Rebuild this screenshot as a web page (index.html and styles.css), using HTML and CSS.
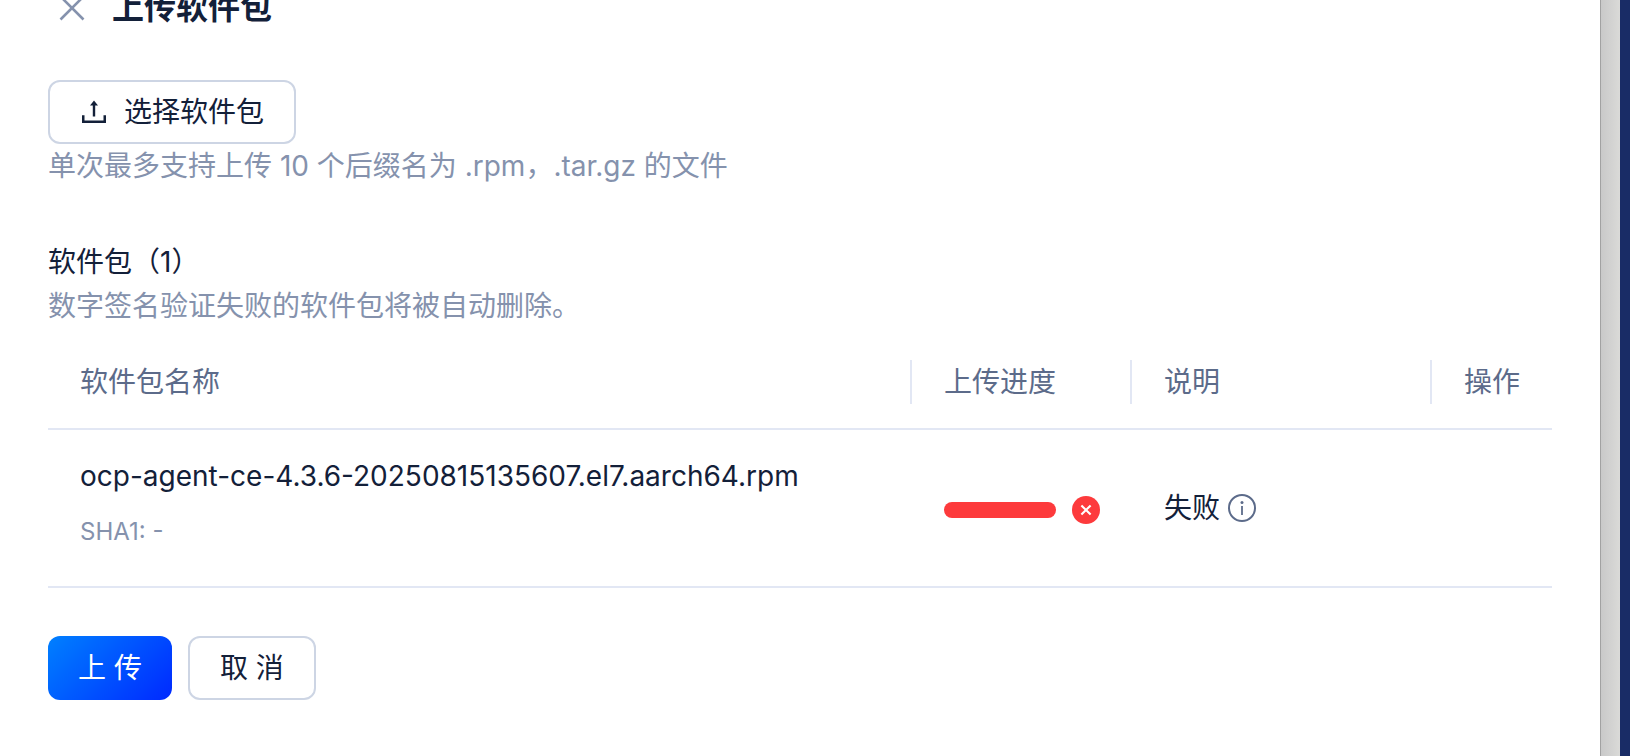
FILE: index.html
```html
<!DOCTYPE html>
<html lang="zh-CN">
<head>
<meta charset="utf-8">
<title>上传软件包</title>
<link rel="stylesheet" href="styles.css">
</head>
<body>
<main class="drawer">
  <header class="drawer-header">
    <button class="close" type="button" aria-label="关闭">
      <svg width="28" height="28" viewBox="0 0 28 28" fill="none" stroke="currentColor" stroke-width="2.6"><path d="M2.500 2.500l23 23M25.500 2.500l-23 23"/></svg>
    </button>
    <h1 class="title">上传软件包</h1>
  </header>

  <section class="picker">
    <button class="btn btn-icon" type="button">
      <svg width="28" height="28" viewBox="0 0 28 28" fill="currentColor" aria-hidden="true"><path d="M12.800 7.500H10L14 2.600l4 4.900h-2.800V18.500h-2.400zM2 17.300h2.500v5.300h19v-5.300H26V25H2z"/></svg>
      <span>选择软件包</span>
    </button>
    <p class="hint">单次最多支持上传 10 个后缀名为 .rpm，.tar.gz 的文件</p>
  </section>

  <section class="packages">
    <h2 class="subtitle">软件包（1）</h2>
    <p class="hint">数字签名验证失败的软件包将被自动删除。</p>
    <table class="table">
      <colgroup><col><col class="col-progress"><col class="col-note"><col class="col-action"></colgroup>
      <thead>
        <tr><th scope="col">软件包名称</th><th scope="col">上传进度</th><th scope="col">说明</th><th scope="col">操作</th></tr>
      </thead>
      <tbody>
        <tr>
          <td>
            <div class="name">ocp-agent-ce-4.3.6-20250815135607.el7.aarch64.rpm</div>
            <div class="sha">SHA1: -</div>
          </td>
          <td>
            <div class="progress">
              <div class="bar" role="progressbar" aria-label="上传进度" aria-valuenow="100"></div>
              <svg width="28" height="28" viewBox="0 0 28 28" aria-hidden="true"><circle cx="14" cy="14" r="14" fill="#fd3a3c"/><path d="M9.400 9.400l9.200 9.200M18.600 9.400l-9.200 9.200" stroke="#fff" stroke-width="2.100"/></svg>
            </div>
          </td>
          <td>
            <div class="status">
              <span>失败</span>
              <svg width="28" height="28" viewBox="0 0 28 28" aria-hidden="true"><circle cx="14" cy="14" r="13" fill="none" stroke="#5c6b8a" stroke-width="2"/><circle cx="14" cy="8.500" r="1.500" fill="#5c6b8a"/><path d="M13.100 12h1.800v9h-1.800z" fill="#5c6b8a"/></svg>
            </div>
          </td>
          <td></td>
        </tr>
      </tbody>
    </table>
  </section>

  <footer class="actions">
    <button class="btn btn-primary" type="button">上 传</button>
    <button class="btn" type="button">取 消</button>
  </footer>
</main>
<div class="window-edge"></div>
<div class="desktop"></div>
</body>
</html>
```
FILE: styles.css
```css
* {
  box-sizing: border-box;
}

body {
  margin: 0;
  min-height: 100vh;
  display: flex;
  background: #fff;
  color: #132039;
  font: 28px/44px Inter, "Noto Sans CJK SC", sans-serif;
}

h1, h2, p {
  margin: 0;
  font-weight: 400;
}

svg {
  display: block;
  flex: none;
}

.drawer {
  flex: 1;
  min-width: 0;
  padding: 0 48px 48px;
}

.window-edge {
  width: 20px;
  border-left: 1px solid #a2a2a2;
  background: linear-gradient(90deg, #c9c9c9, #dadad8);
}

.desktop {
  width: 10px;
  background: #192c66;
}

.drawer-header {
  display: flex;
  align-items: center;
  gap: 16px;
  height: 16px;
  margin-bottom: 64px;
}

.close {
  display: flex;
  justify-content: center;
  width: 48px;
  padding: 0;
  border: 0;
  background: none;
  color: #8592ad;
}

.title {
  font-size: 32px;
  line-height: 48px;
  font-weight: 700;
}

.subtitle {
  font-size: 28px;
}

.btn {
  height: 64px;
  padding: 0 30px;
  border: 2px solid #cdd5e4;
  border-radius: 12px;
  background: #fff;
  color: inherit;
  font: inherit;
}

.btn-icon {
  display: flex;
  align-items: center;
  gap: 16px;
}

.btn-primary {
  border: 0;
  background: linear-gradient(135deg, #0080ff, #0029ff);
  color: #fff;
}

.hint {
  color: #8592ad;
}

.packages {
  margin-top: 52px;
}

.table {
  width: 100%;
  margin-top: 8px;
  table-layout: fixed;
  border-collapse: separate;
  border-spacing: 0;
}

.col-progress {
  width: 220px;
}

.col-note {
  width: 300px;
}

.col-action {
  width: 120px;
}

.table th,
.table td {
  padding: 24px 32px;
  border-bottom: 2px solid #e2e7f4;
  text-align: left;
  vertical-align: middle;
}

.table th {
  padding-right: 0;
  color: #5c6b8a;
  font-weight: 400;
  background: linear-gradient(#e2e7f4, #e2e7f4) right center / 2px 44px no-repeat;
}

.table th:last-child {
  background: none;
}

.sha {
  margin: 12px 0 8px;
  color: #8592ad;
  font-size: 24px;
  line-height: 44px;
}

.progress {
  display: flex;
  align-items: center;
  gap: 16px;
  padding-top: 4px;
}

.bar {
  width: 112px;
  height: 16px;
  border-radius: 8px;
  background: #fd3a3c;
}

.status {
  display: flex;
  align-items: center;
  gap: 8px;
}

.actions {
  display: flex;
  gap: 16px;
  margin-top: 48px;
}
```
